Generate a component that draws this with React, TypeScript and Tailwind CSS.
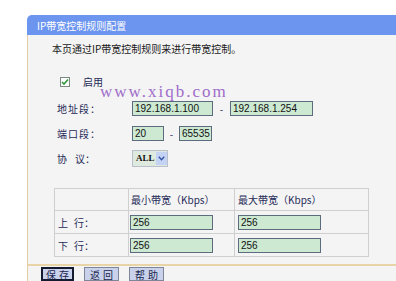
import React from "react";

const cjk = "font-['SimSun','Noto_Sans_CJK_SC',sans-serif]";

const Field = ({ value, w }: { value: string; w: string }) => (
  <div
    className={`${w} h-[15px] border border-[#5d6b7e] bg-[#cde9d2] pl-[2px] text-[10px] leading-[13px] text-[#111] font-['Liberation_Sans',sans-serif]`}
  >
    {value}
  </div>
);

const Btn = ({ label, active }: { label: string; active?: boolean }) => (
  <div
    className={`h-[14px] flex items-center justify-center text-[10px] tracking-[3px] pl-[3px] text-[#1c2550] bg-[#c9d2ea] ${
      active ? "w-[33px] border-2 border-[#141a30]" : "w-[35px] border border-[#7f8698]"
    }`}
  >
    {label}
  </div>
);

export default function App() {
  return (
    <div className={`relative w-[396px] h-[281px] bg-white overflow-hidden ${cjk}`}>
      <div className="pt-[15px] pl-[27px]">
        {/* header */}
        <div className="h-[20px] bg-[#6c95ef] rounded-tl-[5px] flex items-center pl-[10px] text-[10px] text-white">
          IP带宽控制规则配置
        </div>

        {/* body */}
        <div className="h-[246px] bg-[#f4f4f4] border-l border-[#e3cfa2] flex flex-col">
          <div className="pl-[24px] pt-[8px] h-[28px] text-[10px] text-[#1a1a1a] leading-[12px]">
            本页通过IP带宽控制规则来进行带宽控制。
          </div>

          <div className="flex items-center h-[20px] mt-[10px] pl-[32px] text-[10px] text-[#1f2b58]">
            <div className="w-[10px] h-[10px] border border-[#7b8a7e] bg-white flex items-center justify-center">
              <svg width="8" height="8" viewBox="0 0 8 8">
                <path d="M1 4 L3 6 L7 1.5" stroke="#2f9a3a" strokeWidth="1.6" fill="none" />
              </svg>
            </div>
            <span className="ml-[13px]">启用</span>
          </div>

          <div className="flex items-center h-[14px] mt-[10px] pl-[29px] text-[10px] text-[#1f2b58]">
            <span className="w-[75px] tracking-[1px]">地址段：</span>
            <Field value="192.168.1.100" w="w-[81px]" />
            <span className="w-[17px] text-center">-</span>
            <Field value="192.168.1.254" w="w-[83px]" />
          </div>

          <div className="flex items-center h-[14px] mt-[11px] pl-[29px] text-[10px] text-[#1f2b58]">
            <span className="w-[75px] tracking-[1px]">端口段：</span>
            <Field value="20" w="w-[32px]" />
            <span className="w-[15px] text-center">-</span>
            <Field value="65535" w="w-[33px]" />
          </div>

          <div className="flex items-center h-[17px] mt-[10px] pl-[29px] text-[10px] text-[#1f2b58]">
            <span className="w-[75px] flex">
              <span>协</span>
              <span className="ml-[8px]">议：</span>
            </span>
            <div className="w-[36px] h-[17px] border border-[#b9c0cc] bg-[#dfeadf] flex items-center pl-[3px]">
              <span className="text-[9px] font-bold font-['Liberation_Serif',serif] text-[#111] w-[20px]">ALL</span>
              <div className="w-[11px] h-[13px] bg-[#c4d2f4] flex items-center justify-center">
                <svg width="7" height="5" viewBox="0 0 7 5">
                  <path d="M0.8 0.8 L3.5 3.8 L6.2 0.8" stroke="#3354a8" strokeWidth="1.4" fill="none" />
                </svg>
              </div>
            </div>
          </div>

          <div className="pl-[26px] mt-[21px]">
            <table className="border-collapse text-[10px] text-[#1f2b58]">
              <tbody>
                <tr className="h-[22px]">
                  <td className="w-[74px] border border-[#cfcfcf]"></td>
                  <td className="w-[106px] border border-[#cfcfcf] pl-[2px]">最小带宽（Kbps）</td>
                  <td className="w-[134px] border border-[#cfcfcf] pl-[3px]">最大带宽（Kbps）</td>
                </tr>
                <tr className="h-[23px]">
                  <td className="border border-[#cfcfcf] pl-[3px]">
                    <span className="flex">
                      <span>上</span>
                      <span className="ml-[6px]">行：</span>
                    </span>
                  </td>
                  <td className="border border-[#cfcfcf] pl-[1px]"><Field value="256" w="w-[83px]" /></td>
                  <td className="border border-[#cfcfcf] pl-[3px]"><Field value="256" w="w-[83px]" /></td>
                </tr>
                <tr className="h-[23px]">
                  <td className="border border-[#cfcfcf] pl-[3px]">
                    <span className="flex">
                      <span>下</span>
                      <span className="ml-[6px]">行：</span>
                    </span>
                  </td>
                  <td className="border border-[#cfcfcf] pl-[1px]"><Field value="256" w="w-[83px]" /></td>
                  <td className="border border-[#cfcfcf] pl-[3px]"><Field value="256" w="w-[83px]" /></td>
                </tr>
              </tbody>
            </table>
          </div>

          <div className="mt-[7px] h-[2px] bg-[#e8d4a6]" />

          <div className="flex items-center gap-[10px] pl-[13px] mt-[1px]">
            <Btn label="保存" active />
            <Btn label="返回" />
            <Btn label="帮助" />
          </div>
        </div>
      </div>

      {/* watermark */}
      <div className="absolute left-[100px] top-[83px] text-[17px] leading-[18px] tracking-[2px] text-[#a06ccb] font-['Liberation_Serif',serif]">
        www.xiqb.com
      </div>
    </div>
  );
}
